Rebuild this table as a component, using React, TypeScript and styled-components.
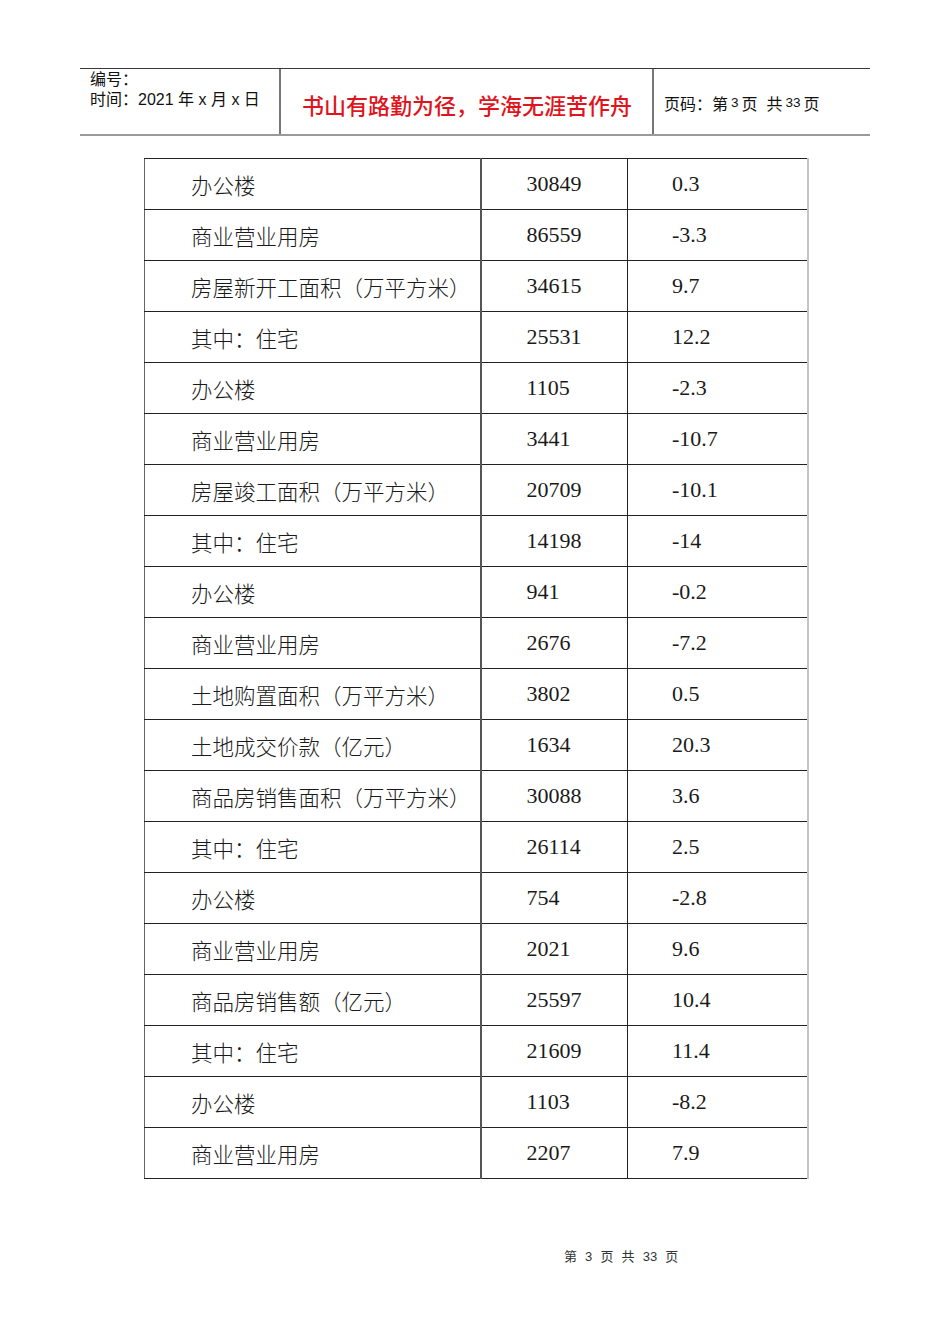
import React from "react";
import styled, { createGlobalStyle } from "styled-components";

const Global = createGlobalStyle`
  html, body { margin: 0; padding: 0; background: #fff; }
  body { width: 950px; min-height: 1344px; }
  * {
    text-spacing-trim: space-all;
  }
`;

const Page = styled.div`
  width: 950px;
  height: 1344px;
  padding-top: 68px;
  box-sizing: border-box;
`;

const Header = styled.div`
  margin-left: 80px;
  width: 790px;
  height: 68px;
  box-sizing: border-box;
  border-top: 1px solid #3a3a3a;
  border-bottom: 2px solid #9a9a9a;
  display: grid;
  grid-template-columns: 201px 373px 1fr;
`;

const HeadCell = styled.div<{ $divider?: boolean }>`
  box-sizing: border-box;
  border-right: ${(p) => (p.$divider ? "2px solid #777" : "none")};
  font-family: "Liberation Sans", "Noto Sans CJK SC", sans-serif;
  color: #111;
`;

const InfoCell = styled(HeadCell)`
  padding: 1px 0 0 10px;
  font-size: 16px;
  line-height: 20px;
`;

const MottoCell = styled(HeadCell)`
  display: flex;
  align-items: center;
  padding: 4px 0 0 21px;
  color: #e0141c;
  font-size: 22px;
  font-weight: 500;
`;

const PageCell = styled(HeadCell)`
  display: flex;
  align-items: center;
  padding: 2px 0 0 10px;
  font-size: 16px;
`;

const Small = styled.span`
  font-size: 13.5px;
  margin: 0 3px;
`;

const Table = styled.table`
  margin: 22px 0 0 144px;
  width: 663px;
  border-collapse: collapse;
  table-layout: fixed;
  border-right: 2px solid #c4c4c4;
`;

const Row = styled.tr`
  height: 51px;
`;

const Cell = styled.td<{ $w: number; $first?: boolean; $last?: boolean }>`
  width: ${(p) => p.$w}px;
  box-sizing: border-box;
  padding: 0 0 0 ${(p) => (p.$first ? 46 : p.$last ? 44 : 45)}px;
  border-top: 1px solid #222;
  border-bottom: 1px solid #222;
  border-left: ${(p) => (p.$first ? "1.5px solid #666" : p.$last ? "1px solid #222" : "2px solid #555")};
  font-family: "Liberation Serif", "Noto Sans CJK SC", serif;
  font-size: ${(p) => (p.$first ? 21.5 : 22)}px;
  font-weight: ${(p) => (p.$first ? 300 : 400)};
  color: #1a1a1a;
  white-space: nowrap;
  vertical-align: middle;
`;

const Footer = styled.div`
  margin: 67px 0 0 564px;
  font-family: "Liberation Sans", "Noto Sans CJK SC", sans-serif;
  font-size: 13px;
  color: #333;
  word-spacing: 4.5px;
  white-space: pre;
`;

const rows: [string, string, string][] = [
  ["办公楼", "30849", "0.3"],
  ["商业营业用房", "86559", "-3.3"],
  ["房屋新开工面积（万平方米）", "34615", "9.7"],
  ["其中：住宅", "25531", "12.2"],
  ["办公楼", "1105", "-2.3"],
  ["商业营业用房", "3441", "-10.7"],
  ["房屋竣工面积（万平方米）", "20709", "-10.1"],
  ["其中：住宅", "14198", "-14"],
  ["办公楼", "941", "-0.2"],
  ["商业营业用房", "2676", "-7.2"],
  ["土地购置面积（万平方米）", "3802", "0.5"],
  ["土地成交价款（亿元）", "1634", "20.3"],
  ["商品房销售面积（万平方米）", "30088", "3.6"],
  ["其中：住宅", "26114", "2.5"],
  ["办公楼", "754", "-2.8"],
  ["商业营业用房", "2021", "9.6"],
  ["商品房销售额（亿元）", "25597", "10.4"],
  ["其中：住宅", "21609", "11.4"],
  ["办公楼", "1103", "-8.2"],
  ["商业营业用房", "2207", "7.9"],
];

export default function App() {
  return (
    <Page>
      <Global />
      <Header>
        <InfoCell $divider>
          <div>编号：</div>
          <div>时间：2021 年 x 月 x 日</div>
        </InfoCell>
        <MottoCell $divider>书山有路勤为径，学海无涯苦作舟</MottoCell>
        <PageCell>
          页码：第<Small>3</Small>页&nbsp;&nbsp;共<Small>33</Small>页
        </PageCell>
      </Header>
      <Table>
        <tbody>
          {rows.map((r, i) => (
            <Row key={i}>
              <Cell $w={336} $first>{r[0]}</Cell>
              <Cell $w={147}>{r[1]}</Cell>
              <Cell $w={180} $last>{r[2]}</Cell>
            </Row>
          ))}
        </tbody>
      </Table>
      <Footer>第 3 页 共 33 页</Footer>
    </Page>
  );
}
